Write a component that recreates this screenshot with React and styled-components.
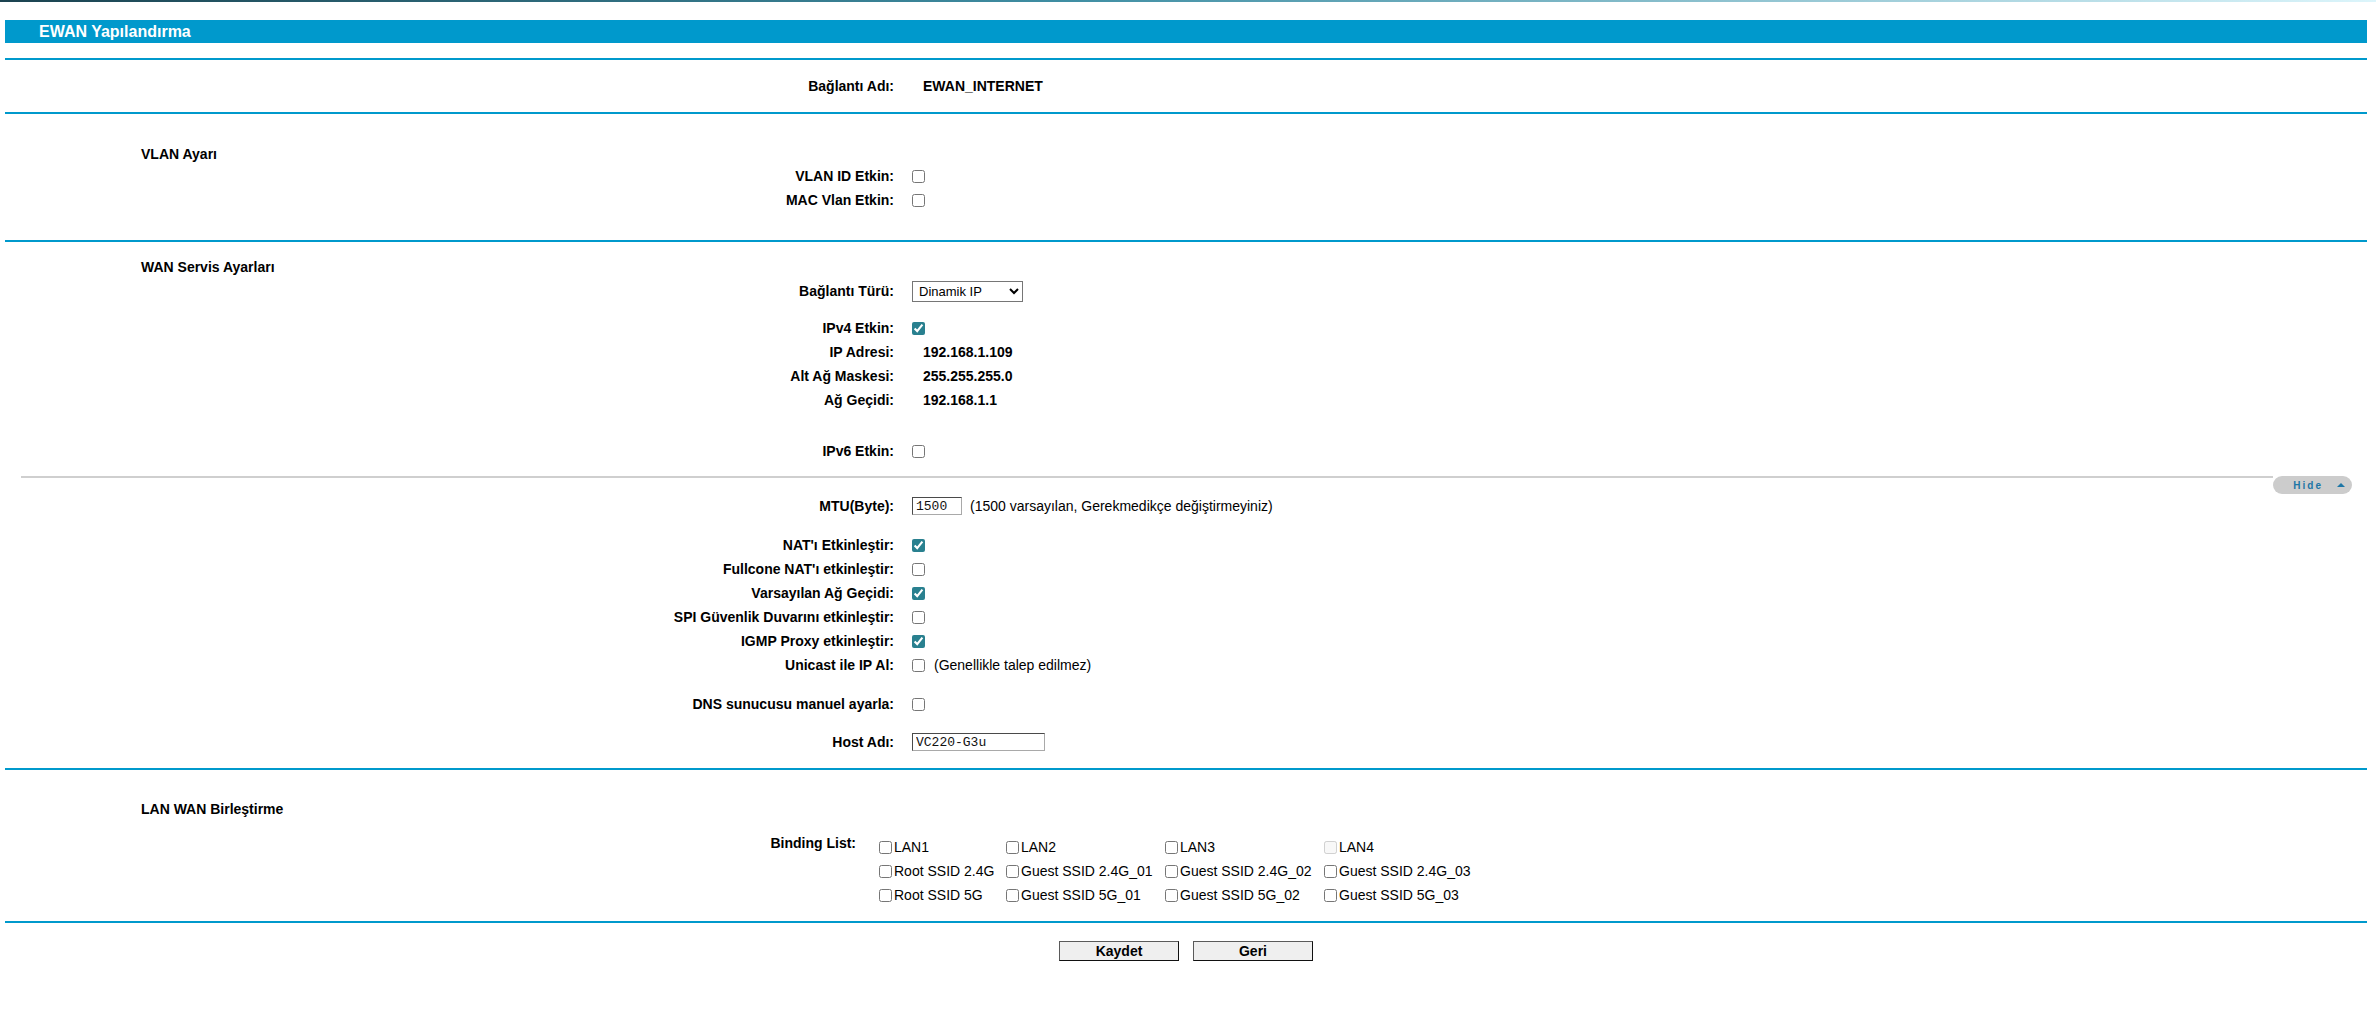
import React from "react";
import styled, { createGlobalStyle } from "styled-components";

const GlobalStyle = createGlobalStyle`
  body {
    margin: 0;
    background: #fff;
    color: #000;
    font-family: "Liberation Sans", Arial, sans-serif;
    font-size: 14px;
  }
`;

const TopStripe = styled.div`
  height: 2px;
  background: linear-gradient(90deg, #1b4350, #3f8ea3 45%, #dcf5fb);
`;

const Page = styled.div`
  padding: 0 9px 60px 5px;
`;

const TitleBar = styled.div`
  margin-top: 18px;
  height: 23px;
  display: flex;
  align-items: center;
  padding-left: 34px;
  background: #0099cc;
  color: #fff;
  font-size: 16px;
  font-weight: bold;
`;

const Rule = styled.div`
  height: 2px;
  background: #0099cc;
  margin-top: ${(p) => p.$top || 0}px;
`;

const Section = styled.section`
  padding-top: ${(p) => p.$top}px;
  padding-bottom: ${(p) => p.$bottom}px;
`;

const SectionTitle = styled.div`
  height: ${(p) => p.$h || 24}px;
  display: flex;
  align-items: center;
  padding-left: 136px;
  font-weight: bold;
`;

const Row = styled.div`
  display: grid;
  grid-template-columns: 889px 1fr;
  column-gap: 18px;
  align-items: center;
  height: 24px;
  margin-top: ${(p) => p.$mt || 0}px;
`;

const Label = styled.div`
  text-align: right;
  font-weight: bold;
  white-space: nowrap;
`;

const Value = styled.div`
  display: flex;
  align-items: center;
  gap: ${(p) => p.$gap || 9}px;
  padding-left: ${(p) => (p.$text ? 11 : 0)}px;
  font-weight: ${(p) => (p.$text ? "bold" : "normal")};
  white-space: nowrap;
`;

const Check = styled.input.attrs({ type: "checkbox" })`
  margin: 0;
  width: 13px;
  height: 13px;
  accent-color: #29808f;
`;

const Select = styled.select`
  width: 111px;
  height: 21px;
  padding: 0 2px;
  border: 1px solid #767676;
  border-radius: 0;
  background: #fff;
  color: #000;
  font-family: "Liberation Sans", Arial, sans-serif;
  font-size: 13px;
`;

const TextInput = styled.input`
  box-sizing: border-box;
  width: ${(p) => p.$w}px;
  height: 18px;
  padding: 0 3px;
  border: 1px solid;
  border-color: #4a4a4a #a9a9a9 #a9a9a9 #4a4a4a;
  background: #fff;
  color: #111;
  font-family: "Liberation Mono", "Courier New", monospace;
  font-size: 13px;
`;

const Note = styled.span`
  font-weight: normal;
`;

const Divider = styled.div`
  display: flex;
  align-items: flex-start;
  margin: ${(p) => p.$mt}px 15px 0 16px;
`;

const DividerLine = styled.div`
  flex: 1;
  height: 2px;
  background: #cfcfcf;
`;

const HidePill = styled.div`
  display: flex;
  align-items: center;
  gap: 14px;
  height: 18px;
  padding: 0 7px 0 20px;
  border-radius: 9px;
  background: #cccccc;
  color: #1d76a6;
  font-size: 10px;
  font-weight: bold;
  letter-spacing: 2px;
`;

const UpArrow = styled.span`
  display: block;
  width: 0;
  height: 0;
  border-left: 4px solid transparent;
  border-right: 4px solid transparent;
  border-bottom: 4px solid #1d76a6;
`;

const BindRow = styled.div`
  display: grid;
  grid-template-columns: 851px 1fr;
  column-gap: 23px;
  align-items: start;
  margin-top: 14px;
`;

const BindLabel = styled.div`
  text-align: right;
  font-weight: bold;
  line-height: 16px;
`;

const BindGrid = styled.div`
  display: grid;
  grid-template-columns: 127px 159px 159px 159px;
  grid-auto-rows: 24px;
  align-items: center;
`;

const BindItem = styled.label`
  display: flex;
  align-items: center;
  gap: 2px;
  white-space: nowrap;
`;

const ButtonBar = styled.div`
  display: flex;
  justify-content: center;
  gap: 14px;
  margin-top: 18px;
`;

const Button = styled.button`
  width: 120px;
  height: 20px;
  padding: 0;
  background: #efefef;
  border: 1px solid;
  border-color: #5a5a5a #111 #111 #5a5a5a;
  border-radius: 0;
  color: #000;
  font-family: "Liberation Sans", Arial, sans-serif;
  font-size: 14px;
  font-weight: bold;
`;

const ipRows = [
  ["IP Adresi:", "192.168.1.109"],
  ["Alt Ağ Maskesi:", "255.255.255.0"],
  ["Ağ Geçidi:", "192.168.1.1"],
];

const natRows = [
  ["NAT'ı Etkinleştir:", true],
  ["Fullcone NAT'ı etkinleştir:", false],
  ["Varsayılan Ağ Geçidi:", true],
  ["SPI Güvenlik Duvarını etkinleştir:", false],
  ["IGMP Proxy etkinleştir:", true],
];

const bindings = [
  "LAN1", "LAN2", "LAN3", "LAN4",
  "Root SSID 2.4G", "Guest SSID 2.4G_01", "Guest SSID 2.4G_02", "Guest SSID 2.4G_03",
  "Root SSID 5G", "Guest SSID 5G_01", "Guest SSID 5G_02", "Guest SSID 5G_03",
];

export default function App() {
  return (
    <>
      <GlobalStyle />
      <TopStripe />
      <Page>
        <TitleBar>EWAN Yapılandırma</TitleBar>
        <Rule $top={15} />

        <Section $top={14} $bottom={14}>
          <Row>
            <Label>Bağlantı Adı:</Label>
            <Value $text>EWAN_INTERNET</Value>
          </Row>
        </Section>
        <Rule />

        <Section $top={30} $bottom={28}>
          <SectionTitle $h={20}>VLAN Ayarı</SectionTitle>
          <Row>
            <Label>VLAN ID Etkin:</Label>
            <Value><Check /></Value>
          </Row>
          <Row>
            <Label>MAC Vlan Etkin:</Label>
            <Value><Check /></Value>
          </Row>
        </Section>
        <Rule />

        <Section $top={13} $bottom={14}>
          <SectionTitle>WAN Servis Ayarları</SectionTitle>
          <Row>
            <Label>Bağlantı Türü:</Label>
            <Value>
              <Select defaultValue="dhcp">
                <option value="dhcp">Dinamik IP</option>
                <option value="static">Statik IP</option>
                <option value="pppoe">PPPoE</option>
              </Select>
            </Value>
          </Row>
          <Row $mt={13}>
            <Label>IPv4 Etkin:</Label>
            <Value><Check defaultChecked /></Value>
          </Row>
          {ipRows.map(([label, value]) => (
            <Row key={label}>
              <Label>{label}</Label>
              <Value $text>{value}</Value>
            </Row>
          ))}
          <Row $mt={27}>
            <Label>IPv6 Etkin:</Label>
            <Value><Check /></Value>
          </Row>

          <Divider $mt={13}>
            <DividerLine />
            <HidePill>
              Hide
              <UpArrow />
            </HidePill>
          </Divider>

          <Row>
            <Label>MTU(Byte):</Label>
            <Value $gap={8}>
              <TextInput $w={50} defaultValue="1500" />
              <Note>(1500 varsayılan, Gerekmedikçe değiştirmeyiniz)</Note>
            </Value>
          </Row>
          {natRows.map(([label, on], i) => (
            <Row key={label} $mt={i === 0 ? 15 : 0}>
              <Label>{label}</Label>
              <Value><Check defaultChecked={on} /></Value>
            </Row>
          ))}
          <Row>
            <Label>Unicast ile IP Al:</Label>
            <Value>
              <Check />
              <Note>(Genellikle talep edilmez)</Note>
            </Value>
          </Row>
          <Row $mt={15}>
            <Label>DNS sunucusu manuel ayarla:</Label>
            <Value><Check /></Value>
          </Row>
          <Row $mt={14}>
            <Label>Host Adı:</Label>
            <Value>
              <TextInput $w={133} defaultValue="VC220-G3u" />
            </Value>
          </Row>
        </Section>
        <Rule />

        <Section $top={27} $bottom={14}>
          <SectionTitle>LAN WAN Birleştirme</SectionTitle>
          <BindRow>
            <BindLabel>Binding List:</BindLabel>
            <BindGrid>
              {bindings.map((name) => (
                <BindItem key={name}>
                  <Check disabled={name === "LAN4"} />
                  {name}
                </BindItem>
              ))}
            </BindGrid>
          </BindRow>
        </Section>
        <Rule />

        <ButtonBar>
          <Button type="button">Kaydet</Button>
          <Button type="button">Geri</Button>
        </ButtonBar>
      </Page>
    </>
  );
}
